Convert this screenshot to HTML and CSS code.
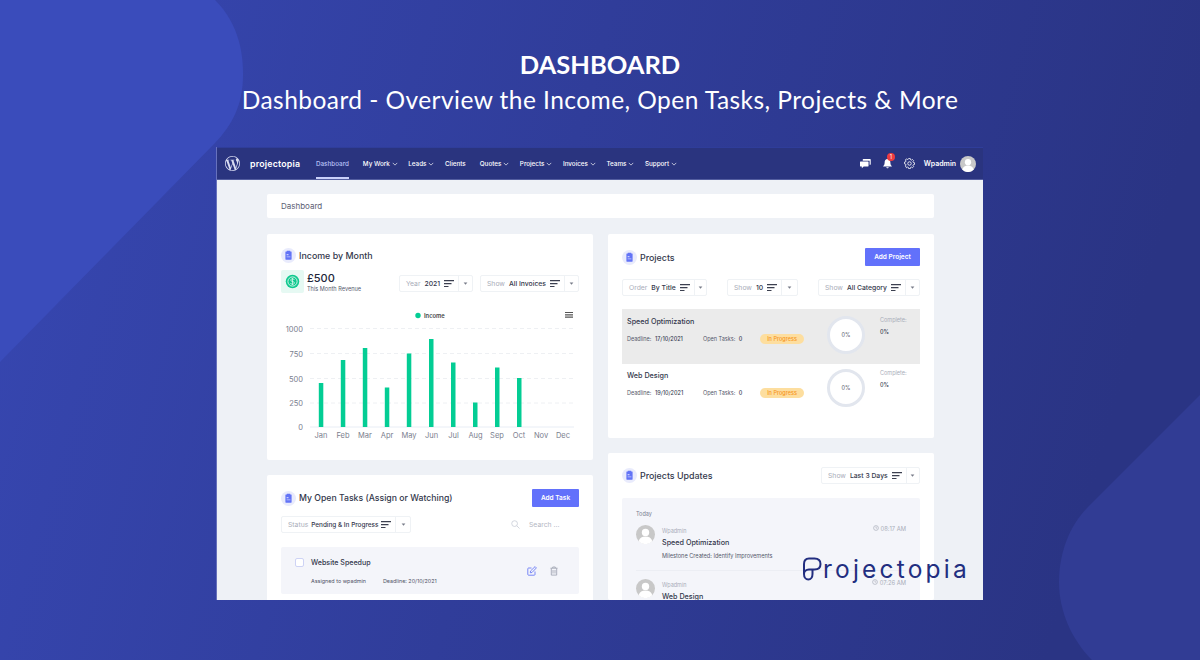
FILE: index.html
```html
<!DOCTYPE html>
<html lang="en">

<head>
    <meta charset="UTF-8">
    <title>Dashboard</title>
    <link rel="stylesheet" href="styles.css">
</head>

<body>
    <svg class="sprite" width="0" height="0">
        <symbol id="sort" viewBox="0 0 10 8"><path d="M0 .7h10M0 3.6h7.5M0 6.5h4.500" stroke="currentColor" stroke-width="1.2" fill="none" /></symbol>
        <symbol id="caret" viewBox="0 0 6 4"><path d="M.5.5h5L3 3.500z" fill="currentColor" /></symbol>
        <symbol id="chev" viewBox="0 0 8 5"><path d="M1 1l3 3 3-3" stroke="currentColor" stroke-width=".9" fill="none" /></symbol>
        <symbol id="doc" viewBox="0 0 16 16"><circle cx="8" cy="8" r="8" fill="#e9ebfc" /><path d="M5.2 3.600h1v-.6h3.600v.6h1c.3 0 .5.2.5.5v7.800c0 .3-.2.5-.5.5H5.200c-.3 0-.5-.2-.5-.5V4.100c0-.3.2-.5.5-.5z" fill="#6273f6" /><path d="M6 6.500h2v1.300H6zM6 9h4v.8H6z" fill="#c9cffb" /></symbol>
        <symbol id="person" viewBox="0 0 20 20"><circle cx="10" cy="10" r="10" fill="#c8c8c8" /><circle cx="10" cy="7.800" r="3.900" fill="#fff" /><path d="M2.800 17c1-3.600 3.800-5 7.200-5s6.200 1.400 7.200 5a10 10 0 0 1-14.400 0z" fill="#fff" /></symbol>
        <symbol id="clock" viewBox="0 0 8 8"><circle cx="4" cy="4" r="3.200" fill="none" stroke="currentColor" stroke-width=".9" /><path d="M4 2v2.200h1.600" fill="none" stroke="currentColor" stroke-width=".8" /></symbol>
    </svg>

    <div class="stage">
        <svg class="backdrop" viewBox="0 0 1200 660" preserveAspectRatio="none">
            <defs>
                <linearGradient id="bg" x1="0" y1="0" x2="1" y2=".15">
                    <stop offset="0" stop-color="#3747b2" />
                    <stop offset=".5" stop-color="#303d9a" />
                    <stop offset="1" stop-color="#2a3484" />
                </linearGradient>
            </defs>
            <rect width="1200" height="660" fill="url(#bg)" />
            <path d="M0 0H215C240 25 243 55 243 75C243 105 232 125 215 143L0 362z" fill="#3a4cbb" />
            <path d="M1200 395L1088 507C1070 525 1059 552 1059 582C1059 612 1072 640 1092 660H1200z" fill="#313c94" />
        </svg>

        <header class="hero">
            <h1>DASHBOARD</h1>
            <p>Dashboard - Overview the Income, Open Tasks, Projects &amp; More</p>
        </header>

        <div class="panel">
            <nav class="topbar">
                <svg class="wp" viewBox="0 0 24 24"><path fill="#d9dcf2" d="M21.469 6.825c.84 1.537 1.318 3.3 1.318 5.175 0 3.979-2.156 7.456-5.363 9.325l3.295-9.527c.615-1.54.82-2.771.82-3.864 0-.405-.026-.78-.07-1.11m-7.981.105c.647-.03 1.232-.105 1.232-.105.582-.075.514-.93-.067-.899 0 0-1.755.135-2.88.135-1.064 0-2.85-.15-2.85-.15-.585-.03-.661.855-.075.885 0 0 .54.061 1.125.09l1.68 4.605-2.37 7.08L5.354 6.9c.649-.03 1.234-.1 1.234-.1.585-.075.516-.93-.065-.896 0 0-1.746.138-2.874.138-.2 0-.438-.008-.69-.015C4.911 3.15 8.235 1.215 12 1.215c2.809 0 5.365 1.072 7.286 2.833-.046-.003-.091-.009-.141-.009-1.06 0-1.812.923-1.812 1.914 0 .89.513 1.643 1.06 2.531.411.72.89 1.643.89 2.977 0 .915-.354 1.994-.821 3.479l-1.075 3.585-3.9-11.61.001.014zM12 22.784c-1.059 0-2.081-.153-3.048-.437l3.237-9.406 3.315 9.087c.024.053.05.101.078.149-1.12.393-2.325.609-3.582.609M1.211 12c0-1.564.336-3.05.935-4.39L7.29 21.709C3.694 19.96 1.212 16.271 1.211 12M12 0C5.385 0 0 5.385 0 12s5.385 12 12 12 12-5.385 12-12S18.615 0 12 0" /></svg>
                <span class="brand">projectopia</span>
                <ul class="menu">
                    <li class="active">Dashboard</li>
                    <li class="drop">My Work <svg><use href="#chev" /></svg></li>
                    <li class="drop">Leads <svg><use href="#chev" /></svg></li>
                    <li>Clients</li>
                    <li class="drop">Quotes <svg><use href="#chev" /></svg></li>
                    <li class="drop">Projects <svg><use href="#chev" /></svg></li>
                    <li class="drop">Invoices <svg><use href="#chev" /></svg></li>
                    <li class="drop">Teams <svg><use href="#chev" /></svg></li>
                    <li class="drop">Support <svg><use href="#chev" /></svg></li>
                </ul>
                <div class="tools">
                    <svg class="tool" viewBox="0 0 12 11"><path d="M3 1.200c0-.4.3-.7.7-.7h7.300c.4 0 .7.3.7.7v5c0 .4-.3.7-.7.7h-.5V2.500H3z" fill="#fff" /><path d="M.5 3.300h8.300c.3 0 .5.2.5.5v4.500c0 .3-.2.5-.5.5H4L2 10.700V8.800H.5c-.3 0-.5-.2-.5-.5V3.800c0-.3.2-.5.5-.5z" fill="#fff" /></svg>
                    <span class="bell">
                        <svg class="tool" viewBox="0 0 11 12"><path d="M5.500 1C3.500 1 2.400 2.500 2.400 4.500c0 2.300-.6 3.300-1.600 4.200v.6h9.400v-.6c-1-.9-1.600-1.900-1.600-4.200C8.600 2.500 7.500 1 5.500 1zM4.200 10h2.600c0 .8-.6 1.300-1.300 1.300S4.200 10.800 4.200 10z" fill="#fff" /></svg>
                        <i class="badge">1</i>
                    </span>
                    <svg class="tool" viewBox="0 0 12 12"><circle cx="6" cy="6" r="1.900" fill="none" stroke="#fff" stroke-width=".9" /><path d="M5 .6h2l.3 1.400 1.100.5 1.200-.8 1.400 1.400-.8 1.200.5 1.100 1.400.3v2l-1.400.3-.5 1.100.8 1.200-1.400 1.400-1.200-.8-1.100.5-.3 1.400H5l-.3-1.400-1.100-.5-1.200.8L1 9.500l.8-1.200-.5-1.100L-.1 6.900v-2l1.400-.3.5-1.100L1 2.300 2.400.9l1.200.8 1.100-.5z" transform="translate(.6 .1) scale(.9)" fill="none" stroke="#fff" stroke-width="1" /></svg>
                    <span class="who">Wpadmin</span>
                    <svg class="avatar-top"><use href="#person" /></svg>
                </div>
            </nav>

            <main class="content">
                <div class="crumb">Dashboard</div>
                <div class="columns">
                    <div class="col">
                        <section class="card income">
                            <h2 class="card-title"><svg><use href="#doc" /></svg>Income by Month</h2>
                            <div class="income-head">
                                <span class="money">
                                    <svg viewBox="0 0 14 14"><circle cx="7" cy="7" r="6.300" fill="#10c98f" /><circle cx="7" cy="7" r="4.300" fill="none" stroke="#e6f9f3" stroke-width=".8" /><path d="M8.700 5.500C8.500 4.800 7.800 4.500 7 4.500c-1 0-1.700.5-1.700 1.200C5.300 7.500 8.800 6.500 8.800 8.300c0 .8-.8 1.300-1.800 1.300s-1.700-.4-1.900-1.100M7 3.700v6.600" fill="none" stroke="#e6f9f3" stroke-width=".7" /></svg>
                                </span>
                                <div class="revenue">
                                    <b>£500</b>
                                    <small>This Month Revenue</small>
                                </div>
                                <div class="picker year">
                                    <span class="picker-main"><em>Year</em><b>2021</b><svg><use href="#sort" /></svg></span>
                                    <span class="picker-caret"><svg><use href="#caret" /></svg></span>
                                </div>
                                <div class="picker invoices">
                                    <span class="picker-main"><em>Show</em><b>All Invoices</b><svg><use href="#sort" /></svg></span>
                                    <span class="picker-caret"><svg><use href="#caret" /></svg></span>
                                </div>
                            </div>
                            <svg class="chart" viewBox="0 0 326 140" width="326" height="140">
                                <circle cx="151" cy="9.500" r="2.700" fill="#03cd94" />
                                <text x="157" y="12" class="legend">Income</text>
                                <path d="M298 6.500h8M298 8.800h8M298 11.100h8" stroke="#555" stroke-width="1.200" />
                                <g stroke="#eef0f3" stroke-dasharray="4 3">
                                    <path d="M43 22.500H307M43 47.500H307M43 72.500H307M43 97H307" />
                                </g>
                                <path d="M43 121H307" stroke="#e8edf5" />
                                <g class="ticks" text-anchor="end">
                                    <text x="36" y="25.500">1000</text>
                                    <text x="36" y="50.500">750</text>
                                    <text x="36" y="75.500">500</text>
                                    <text x="36" y="100">250</text>
                                    <text x="36" y="124">0</text>
                                </g>
                                <g fill="#03cd94">
                                    <rect x="51.800" y="77" width="4.500" height="44" />
                                    <rect x="73.800" y="54" width="4.500" height="67" />
                                    <rect x="95.800" y="42" width="4.500" height="79" />
                                    <rect x="117.800" y="81.500" width="4.500" height="39.500" />
                                    <rect x="139.800" y="47.500" width="4.500" height="73.500" />
                                    <rect x="162" y="33" width="4.500" height="88" />
                                    <rect x="184" y="56.500" width="4.500" height="64.500" />
                                    <rect x="206" y="96.500" width="4.500" height="24.500" />
                                    <rect x="228" y="61.500" width="4.500" height="59.500" />
                                    <rect x="250" y="72" width="4.500" height="49" />
                                </g>
                                <g class="ticks months" text-anchor="middle">
                                    <text x="54" y="132">Jan</text>
                                    <text x="76" y="132">Feb</text>
                                    <text x="98" y="132">Mar</text>
                                    <text x="120" y="132">Apr</text>
                                    <text x="142" y="132">May</text>
                                    <text x="164.500" y="132">Jun</text>
                                    <text x="186.500" y="132">Jul</text>
                                    <text x="208.500" y="132">Aug</text>
                                    <text x="230" y="132">Sep</text>
                                    <text x="252" y="132">Oct</text>
                                    <text x="274" y="132">Nov</text>
                                    <text x="296" y="132">Dec</text>
                                </g>
                            </svg>
                        </section>

                        <section class="card tasks">
                            <div class="card-head">
                                <h2 class="card-title"><svg><use href="#doc" /></svg>My Open Tasks (Assign or Watching)</h2>
                                <button class="add">Add Task</button>
                            </div>
                            <div class="filters">
                                <div class="picker status">
                                    <span class="picker-main"><em>Status</em><b>Pending &amp; In Progress</b><svg><use href="#sort" /></svg></span>
                                    <span class="picker-caret"><svg><use href="#caret" /></svg></span>
                                </div>
                                <div class="search">
                                    <svg viewBox="0 0 10 10"><circle cx="4" cy="4" r="3.200" fill="none" stroke="#c9ccd6" stroke-width=".9" /><path d="M6.400 6.400L9.500 9.500" stroke="#c9ccd6" stroke-width=".9" /></svg>
                                    Search ...
                                </div>
                            </div>
                            <div class="task">
                                <span class="check"></span>
                                <div class="task-body">
                                    <h3>Website Speedup</h3>
                                    <p><span>Assigned to wpadmin</span><span>Deadline: 20/10/2021</span></p>
                                </div>
                                <svg class="task-icon" viewBox="0 0 10 10"><path d="M8 5.500v3c0 .4-.3.7-.7.7H1.500c-.4 0-.7-.3-.7-.7V2.700c0-.4.3-.7.7-.7h3" fill="none" stroke="#6b7cf6" stroke-width=".9" /><path d="M3.500 5l4.600-4.400 1.300 1.300L5 6.500l-1.700.3z" fill="none" stroke="#6b7cf6" stroke-width=".9" /></svg>
                                <svg class="task-icon" viewBox="0 0 10 10"><path d="M1.500 2.200h7M3.700 2.200V1h2.600v1.200M2.300 2.200v6.900h5.400V2.200M4 4v3.500M6 4v3.500" fill="none" stroke="#a4a8b6" stroke-width=".9" /></svg>
                            </div>
                        </section>
                    </div>

                    <div class="col">
                        <section class="card projects">
                            <div class="card-head">
                                <h2 class="card-title"><svg><use href="#doc" /></svg>Projects</h2>
                                <button class="add">Add Project</button>
                            </div>
                            <div class="filters">
                                <div class="picker">
                                    <span class="picker-main"><em>Order</em><b>By Title</b><svg><use href="#sort" /></svg></span>
                                    <span class="picker-caret"><svg><use href="#caret" /></svg></span>
                                </div>
                                <div class="picker">
                                    <span class="picker-main"><em>Show</em><b>10</b><svg><use href="#sort" /></svg></span>
                                    <span class="picker-caret"><svg><use href="#caret" /></svg></span>
                                </div>
                                <div class="picker">
                                    <span class="picker-main"><em>Show</em><b>All Category</b><svg><use href="#sort" /></svg></span>
                                    <span class="picker-caret"><svg><use href="#caret" /></svg></span>
                                </div>
                            </div>
                            <div class="project hover">
                                <div class="project-info">
                                    <h3>Speed Optimization</h3>
                                    <div class="project-meta">
                                        <span class="deadline">Deadline: <b>17/10/2021</b></span>
                                        <span class="open">Open Tasks: <b>0</b></span>
                                        <span class="pill">In Progress</span>
                                    </div>
                                </div>
                                <div class="ring">0%</div>
                                <div class="complete"><span>Complete:</span><b>0%</b></div>
                            </div>
                            <div class="project">
                                <div class="project-info">
                                    <h3>Web Design</h3>
                                    <div class="project-meta">
                                        <span class="deadline">Deadline: <b>19/10/2021</b></span>
                                        <span class="open">Open Tasks: <b>0</b></span>
                                        <span class="pill">In Progress</span>
                                    </div>
                                </div>
                                <div class="ring">0%</div>
                                <div class="complete"><span>Complete:</span><b>0%</b></div>
                            </div>
                        </section>

                        <section class="card updates">
                            <div class="card-head">
                                <h2 class="card-title"><svg><use href="#doc" /></svg>Projects Updates</h2>
                                <div class="picker">
                                    <span class="picker-main"><em>Show</em><b>Last 3 Days</b><svg><use href="#sort" /></svg></span>
                                    <span class="picker-caret"><svg><use href="#caret" /></svg></span>
                                </div>
                            </div>
                            <div class="feed">
                                <div class="feed-day">Today</div>
                                <article class="entry">
                                    <svg class="entry-avatar"><use href="#person" /></svg>
                                    <div class="entry-body">
                                        <span class="entry-user">Wpadmin</span>
                                        <h3>Speed Optimization</h3>
                                        <p>Milestone Created: Identify Improvements</p>
                                    </div>
                                    <time><svg><use href="#clock" /></svg>08:17 AM</time>
                                </article>
                                <article class="entry">
                                    <svg class="entry-avatar"><use href="#person" /></svg>
                                    <div class="entry-body">
                                        <span class="entry-user">Wpadmin</span>
                                        <h3>Web Design</h3>
                                    </div>
                                    <time><svg><use href="#clock" /></svg>07:26 AM</time>
                                </article>
                            </div>
                        </section>
                    </div>
                </div>
            </main>

            <div class="logo">
                <svg viewBox="0 0 20 24"><path d="M2 17V7C2 3.500 4 1.500 7 1.500H12.500C16.200 1.500 18.500 3.600 18.500 7C18.500 10.400 16.200 12.500 12.500 12.500H7C4 12.500 2 14.500 2 17C2 20.200 3.800 22.500 6.300 22.500C8.800 22.500 10.500 20.200 10.500 17V12.500" fill="none" stroke="#222e80" stroke-width="2" stroke-linecap="round" /></svg>
                <span>rojectopia</span>
            </div>
        </div>
    </div>
</body>

</html>
```

FILE: styles.css
```css
* {
    box-sizing: border-box;
}

html,
body {
    margin: 0;
    height: 660px;
    overflow: hidden;
}

body {
    font-family: "Inter", "Liberation Sans", sans-serif;
    color: #3a3f55;
}

h1,
h2,
h3,
p {
    margin: 0;
}

em {
    font-style: normal;
}

.sprite {
    position: absolute;
}

.stage {
    position: relative;
    width: 1200px;
    height: 660px;
    overflow: hidden;
    padding-top: 49px;
}

.backdrop {
    position: absolute;
    left: 0;
    top: 0;
    width: 1200px;
    height: 660px;
}

.hero {
    position: relative;
    text-align: center;
    color: white;
    font-family: "Lato", sans-serif;
}

.hero h1 {
    font-size: 25.5px;
    line-height: 30px;
    font-weight: 700;
}

.hero p {
    margin-top: 6px;
    font-size: 24.5px;
    line-height: 30px;
    letter-spacing: .45px;
}

.panel {
    position: relative;
    width: 766px;
    height: 453px;
    margin: 32px 0 0 217px;
    background: #eef1f6;
    overflow: hidden;
    box-shadow: -1px 0 0 rgba(255, 255, 255, .25);
}

/* top bar */
.topbar {
    display: flex;
    align-items: center;
    height: 33px;
    padding: 0 7px 0 8px;
    background: #2a347f;
    border-top: 1px solid #2f3d9a;
    border-bottom: 1px solid #545ea0;
    color: white;
}

.wp {
    width: 15px;
    height: 15px;
    flex: none;
}

.brand {
    margin-left: 10px;
    width: 66px;
    font-size: 8.8px;
    font-weight: 600;
    letter-spacing: .2px;
}

.menu {
    display: flex;
    gap: 14px;
    height: 100%;
    margin: 0;
    padding: 0;
    list-style: none;
    font-size: 6.3px;
    font-weight: 500;
}

.menu li {
    display: flex;
    align-items: center;
    gap: 2px;
    white-space: nowrap;
}

.menu li svg {
    width: 6px;
    height: 4px;
}

.menu .drop {
    margin-right: -3.5px;
}

.menu .active {
    color: #b9c2f7;
    box-shadow: inset 0 -2px 0 #c9d0fa;
}

.tools {
    display: flex;
    align-items: center;
    margin-left: auto;
}

.tool {
    width: 11px;
    height: 11px;
    display: block;
}

.bell {
    position: relative;
    margin: 0 11px;
}

.badge {
    position: absolute;
    left: 5px;
    top: -5px;
    width: 8px;
    height: 8px;
    border-radius: 50%;
    background: #ed3b40;
    font-style: normal;
    font-size: 5.5px;
    line-height: 8px;
    text-align: center;
}

.who {
    margin-left: 9px;
    font-size: 7px;
    font-weight: 600;
}

.avatar-top {
    width: 16px;
    height: 16px;
    margin-left: 4px;
}

/* content */
.content {
    padding: 14px 49px 0 50px;
}

.crumb {
    height: 24px;
    padding-left: 14px;
    background: white;
    border-radius: 2px;
    font-size: 8px;
    line-height: 24px;
    color: #5c6074;
}

.columns {
    display: grid;
    grid-template-columns: 326px 326px;
    gap: 15px;
    margin-top: 16px;
}

.col {
    display: flex;
    flex-direction: column;
    gap: 15px;
}

.card {
    background: white;
    border-radius: 2px;
    padding: 14px;
}

.card-head {
    display: flex;
    align-items: center;
    justify-content: space-between;
}

.card-title {
    display: flex;
    align-items: center;
    gap: 3px;
    font-size: 8.9px;
    font-weight: 500;
    color: #33374b;
}

.card-title svg {
    width: 15px;
    height: 15px;
}

.tasks .card-title {
    font-size: 8.7px;
}

.add {
    height: 18px;
    padding: 0;
    width: 47px;
    border: 0;
    border-radius: 1px;
    background: #6271fb;
    color: white;
    font: 600 6.5px "Inter", sans-serif;
}

.projects .add {
    width: 55px;
}

/* filter boxes */
.picker {
    display: flex;
    height: 17px;
    border: 1px solid #eff2f5;
    border-radius: 2px;
    background: white;
    font-size: 6.8px;
}

.picker-main {
    display: flex;
    flex: 1;
    align-items: center;
    gap: 4px;
    padding: 0 4px 0 6px;
    white-space: nowrap;
}

.picker-main em {
    color: #a9adb9;
}

.picker-main b {
    font-weight: 500;
    color: #34384c;
}

.picker-main svg {
    width: 10px;
    height: 8px;
    color: #3c4050;
}

.picker-caret {
    display: flex;
    align-items: center;
    justify-content: center;
    width: 16px;
    border-left: 1px solid #eff2f5;
    color: #777b88;
}

.picker-caret svg {
    width: 5px;
    height: 3px;
}

.filters {
    display: flex;
    justify-content: space-between;
    align-items: center;
}

/* income */
.income {
    height: 226px;
}

.income-head {
    display: flex;
    align-items: flex-start;
    height: 24px;
    margin-top: 7px;
}

.money {
    display: flex;
    align-items: center;
    justify-content: center;
    width: 23px;
    height: 23px;
    border-radius: 2px;
    background: #e6f9f3;
}

.money svg {
    width: 15px;
    height: 15px;
}

.revenue {
    margin: 2px 0 0 3px;
    width: 92px;
}

.revenue b {
    display: block;
    font-size: 11px;
    line-height: 13px;
    font-weight: 500;
    color: #23263a;
}

.revenue small {
    display: block;
    font-size: 5.6px;
    line-height: 8px;
    color: #55596b;
}

.year {
    width: 74px;
    margin-top: 5px;
}

.invoices {
    width: 99px;
    margin: 5px 0 0 7px;
}

.chart {
    display: block;
    margin: 12px 0 0 -14px;
}

.legend {
    font-size: 5.8px;
    font-weight: 600;
    fill: #444;
}

.ticks text {
    font-size: 7.5px;
    fill: #7a7e8e;
}

/* tasks */
.tasks {
    height: 160px;
}

.tasks .filters {
    margin-top: 9px;
}

.status {
    width: 130px;
}

.status b {
    font-size: 6.4px;
}

.status .picker-main {
    gap: 3px;
}

.search {
    display: flex;
    align-items: center;
    gap: 9px;
    width: 68px;
    font-size: 6.8px;
    color: #b4b7c3;
}

.search svg {
    width: 9px;
    height: 9px;
}

.task {
    display: flex;
    align-items: center;
    height: 47px;
    margin-top: 14px;
    padding: 0 20px 0 14px;
    background: #f4f5fa;
    border-radius: 2px;
}

.check {
    align-self: flex-start;
    width: 9px;
    height: 9px;
    margin-top: 11px;
    background: white;
    border: 1px solid #ced3f5;
    border-radius: 2px;
}

.task-body {
    flex: 1;
    margin-left: 7px;
}

.task h3 {
    font-size: 7.1px;
    font-weight: 500;
    color: #33374b;
}

.task p {
    display: flex;
    gap: 17px;
    margin-top: 11px;
    font-size: 5.4px;
    color: #4f5366;
}

.task-icon {
    width: 10px;
    height: 10px;
    margin-left: 12px;
}

/* projects */
.projects {
    height: 204px;
}

.projects .filters {
    margin-top: 13px;
}

.projects .picker:first-child {
    width: 85px;
}

.projects .picker:nth-child(2) {
    width: 71px;
}

.projects .picker:last-child {
    width: 102px;
}

.project {
    display: flex;
    height: 54px;
    margin-top: -2px;
    padding: 0 5px;
}

.project.hover {
    margin-top: 13px;
    height: 55px;
    background: #ebebeb;
}

.project-info {
    width: 200px;
    padding-top: 8px;
}

.project + .project .project-info {
    padding-top: 9px;
}

.project h3 {
    font-size: 7.2px;
    font-weight: 500;
    color: #33374b;
}

.project-meta {
    display: flex;
    align-items: center;
    margin-top: 8px;
    font-size: 5.5px;
    color: #55596b;
}

.project-meta b {
    font-weight: 500;
    margin-left: 2px;
    color: #3a3f55;
}

.deadline {
    width: 76px;
}

.open {
    width: 57px;
}

.pill {
    width: 44px;
    height: 10px;
    border-radius: 5px;
    background: #fdde9f;
    color: #f7951e;
    line-height: 10px;
    text-align: center;
    font-weight: 500;
}

.ring {
    width: 38px;
    height: 38px;
    margin-top: 7px;
    border: 3px solid #e2e6ee;
    border-radius: 50%;
    background: white;
    font-size: 5.5px;
    line-height: 32px;
    text-align: center;
    color: #55596b;
}

.complete {
    margin-left: 15px;
    padding-top: 8px;
    font-size: 5.5px;
}

.complete span {
    display: block;
    color: #a9adb9;
}

.complete b {
    display: block;
    margin-top: 6px;
    font-weight: 500;
    color: #3a3f55;
}

/* updates */
.updates {
    height: 147px;
}

.updates .picker {
    width: 99px;
}

.feed {
    margin-top: 14px;
    padding: 12px 14px 0;
    height: 120px;
    background: #f4f5fa;
    border-radius: 2px;
}

.feed-day {
    font-size: 5.5px;
    line-height: 8px;
    color: #7d8192;
}

.entry {
    display: flex;
    margin-top: 7px;
    height: 45px;
}

.entry + .entry {
    margin-top: 0;
    padding-top: 8px;
    border-top: 1px solid #eceef4;
}

.entry-avatar {
    width: 19px;
    height: 19px;
}

.entry-body {
    flex: 1;
    margin-left: 7px;
}

.entry-user {
    display: block;
    margin-top: 2px;
    font-size: 5.5px;
    line-height: 8px;
    color: #a9adb9;
}

.entry h3 {
    margin-top: 2.5px;
    font-size: 7.2px;
    line-height: 9px;
    font-weight: 500;
    color: #33374b;
}

.entry p {
    margin-top: 6.5px;
    font-size: 5.6px;
    line-height: 7px;
    color: #55596b;
}

.entry time {
    display: flex;
    align-items: flex-start;
    gap: 2px;
    height: 7px;
    font-size: 5.8px;
    line-height: 7px;
    color: #a9adb9;
}

.entry time svg {
    width: 6px;
    height: 6px;
}

/* logo over the screenshot */
.logo {
    position: absolute;
    left: 585px;
    top: 410px;
    display: flex;
    align-items: center;
    gap: 1px;
    color: #222e80;
    font-size: 24.5px;
    letter-spacing: 3.2px;
    line-height: 22px;
}

.logo svg {
    width: 20px;
    height: 24px;
}
```
